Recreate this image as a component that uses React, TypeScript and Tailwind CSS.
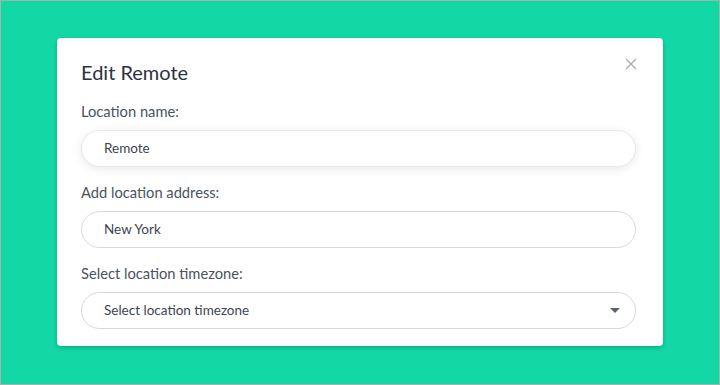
import React from "react";

const Field = ({
  label,
  value,
  focused,
  select,
}: {
  label: string;
  value: string;
  focused?: boolean;
  select?: boolean;
}) => {
  return (
    <div className="flex flex-col">
      <label className="text-[14.7px] leading-[18px] text-[#4a5360] mb-[10px]">
        {label}
      </label>
      <div
        className={
          "h-[37px] rounded-full border flex items-center pl-[22px] pr-[15px] text-[13.5px] text-[#3d4450] bg-white " +
          (focused
            ? "border-[#e6e8eb] shadow-[0_2px_10px_rgba(0,0,0,0.09)]"
            : "border-[#d5d9dd]")
        }
      >
        <span className="flex-1">{value}</span>
        {select && (
          <svg width="10" height="5" viewBox="0 0 10 5">
            <path d="M0 0h10L5 5z" fill="#5b6270" />
          </svg>
        )}
      </div>
    </div>
  );
};

export default function App() {
  return (
    <div
      className="w-[720px] h-[385px] bg-[#12d8a5] border border-[#a9b1b0] flex items-start justify-center pt-[37px]"
      style={{ fontFamily: "Lato, 'Noto Sans', sans-serif" }}
    >
      <div className="relative w-[606px] bg-white rounded-[4px] shadow-[0_2px_4px_rgba(0,0,0,0.2)] pl-[24px] pr-[27px] pt-[20px] pb-[17px]">
        <button className="absolute right-[26px] top-[20px] text-[#a3adb6]">
          <svg width="12" height="12" viewBox="0 0 12 12">
            <path d="M1 1l10 10M11 1L1 11" stroke="currentColor" strokeWidth="1.3" />
          </svg>
        </button>
        <h2 className="text-[20px] leading-[28px] text-[#2b3340] mb-[16px]">Edit Remote</h2>
        <div className="flex flex-col gap-[16px]">
          <Field label="Location name:" value="Remote" focused />
          <Field label="Add location address:" value="New York" />
          <Field label="Select location timezone:" value="Select location timezone" select />
        </div>
      </div>
    </div>
  );
}
